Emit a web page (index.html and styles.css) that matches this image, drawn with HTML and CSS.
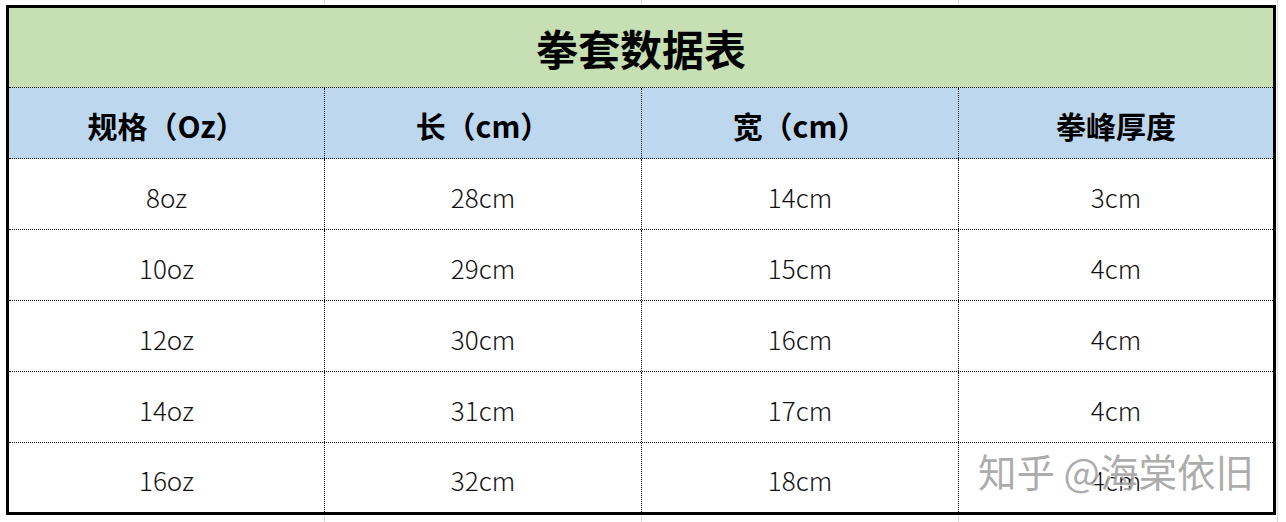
FILE: index.html
```html
<!DOCTYPE html>
<html lang="zh-CN">
<head>
<meta charset="utf-8">
<title>拳套数据表</title>
<link rel="stylesheet" href="styles.css">
</head>
<body>
<div class="sheet">
  <div class="table">
    <div class="title">拳套数据表</div>
    <div class="row head">
      <div class="cell">规格（Oz）</div>
      <div class="cell">长（cm）</div>
      <div class="cell">宽（cm）</div>
      <div class="cell">拳峰厚度</div>
    </div>
    <div class="row data">
      <div class="cell">8oz</div><div class="cell">28cm</div><div class="cell">14cm</div><div class="cell">3cm</div>
    </div>
    <div class="row data">
      <div class="cell">10oz</div><div class="cell">29cm</div><div class="cell">15cm</div><div class="cell">4cm</div>
    </div>
    <div class="row data">
      <div class="cell">12oz</div><div class="cell">30cm</div><div class="cell">16cm</div><div class="cell">4cm</div>
    </div>
    <div class="row data">
      <div class="cell">14oz</div><div class="cell">31cm</div><div class="cell">17cm</div><div class="cell">4cm</div>
    </div>
    <div class="row data last">
      <div class="cell">16oz</div><div class="cell">32cm</div><div class="cell">18cm</div><div class="cell">4cm</div>
    </div>
    <div class="watermark">知乎 @海棠依旧</div>
  </div>
</div>
</body>
</html>
```
FILE: styles.css
```css
html, body {
  margin: 0;
  padding: 0;
  background: #ffffff;
  width: 1286px;
  height: 522px;
  overflow: hidden;
}

body {
  font-family: "Noto Sans CJK SC", "Noto Sans", sans-serif;
  background-image:
    linear-gradient(to right, transparent 324px, #d9d9d9 324px, #d9d9d9 325px, transparent 325px,
      transparent 641px, #d9d9d9 641px, #d9d9d9 642px, transparent 642px,
      transparent 958px, #d9d9d9 958px, #d9d9d9 959px, transparent 959px,
      transparent 1277px, #d9d9d9 1277px, #d9d9d9 1278px, transparent 1278px);
}

.sheet {
  padding: 5px 0 0 6px;
}

.table {
  position: relative;
  width: 1264px;
  border: 3px solid #000;
  background: #fff;
  display: flex;
  flex-direction: column;
}

.title {
  height: 80px;
  background: #c6e0b4;
  border-bottom: 1px dotted #000;
  display: flex;
  align-items: center;
  justify-content: center;
  font-size: 42px;
  font-weight: 700;
  color: #000;
  padding-top: 0;
  box-sizing: border-box;
}

.row {
  display: grid;
  grid-template-columns: 316px 317px 317px 314px;
  height: 71px;
  border-bottom: 1px dotted #000;
  box-sizing: border-box;
}

.row.last {
  border-bottom: none;
  height: 69px;
}

.cell {
  display: flex;
  align-items: center;
  justify-content: center;
  border-right: 1px dotted #000;
}

.cell:last-child {
  border-right: none;
}

.head {
  background: #bdd7ee;
  height: 71px;
}

.head .cell {
  font-size: 30px;
  font-weight: 700;
  color: #000;
  padding-top: 3px;
  box-sizing: border-box;
}

.data .cell {
  font-size: 26px;
  font-weight: 300;
  color: #111;
  padding-top: 4px;
  box-sizing: border-box;
}

.watermark {
  position: absolute;
  left: 969px;
  top: 434px;
  font-size: 38.5px;
  font-weight: 400;
  color: rgba(140, 140, 140, 0.72);
  text-shadow: 1px 1px 0 rgba(255,255,255,0.8);
  white-space: nowrap;
  pointer-events: none;
}
```
